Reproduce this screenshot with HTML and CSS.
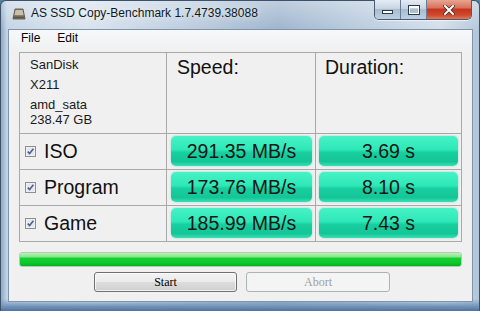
FILE: index.html
```html
<!DOCTYPE html>
<html lang="en">
<head>
	<meta charset="UTF-8">
	<title>AS SSD Copy-Benchmark 1.7.4739.38088</title>
	<link rel="stylesheet" href="styles.css">
</head>
<body>
	<div class="window">
		<!-- title bar -->
		<div class="titlebar">
			<svg class="app-icon" width="14" height="13" viewBox="0 0 14 13">
				<path d="M1 12 L3 2 L11 2 L13 12 Z" fill="#8a7f6a" stroke="#4f4636" stroke-width="0.8"/>
				<path d="M3.5 3 L10.5 3 L11.5 8 L2.5 8 Z" fill="#c8bfa8"/>
				<rect x="2" y="9.5" width="10" height="1.5" fill="#5e5443"/>
			</svg>
			<span class="title">AS SSD Copy-Benchmark 1.7.4739.38088</span>
			<div class="caption-buttons">
				<div class="cap-btn cap-min"><span class="glyph-min"></span></div>
				<div class="cap-btn cap-max"><span class="glyph-max"></span></div>
				<div class="cap-btn cap-close">
					<svg width="12" height="10" viewBox="0 0 12 10">
						<path d="M2 1 L10 9 M10 1 L2 9" stroke="#3a2a2a" stroke-width="3.4" stroke-linecap="square"/>
						<path d="M2 1 L10 9 M10 1 L2 9" stroke="#fff" stroke-width="2" stroke-linecap="square"/>
					</svg>
				</div>
			</div>
		</div>

		<!-- client area -->
		<div class="client">
			<div class="menubar">
				<span>File</span>
				<span>Edit</span>
			</div>

			<div class="results">
				<div class="cell drive-info">
					<div class="info-line">SanDisk</div>
					<div class="info-line">X211</div>
					<div class="info-line">amd_sata</div>
					<div class="info-line last">238.47 GB</div>
				</div>
				<div class="cell head">Speed:</div>
				<div class="cell head">Duration:</div>

				<div class="cell test-name">
					<span class="check"><svg width="11" height="11" viewBox="0 0 11 11"><rect x="0.5" y="0.5" width="10" height="10" fill="#f4f4f4" stroke="#8e8f8f"/><rect x="1.5" y="1.5" width="8" height="8" fill="#e6e8ec"/><path d="M2.8 5.6 L4.6 7.6 L8.4 2.8" fill="none" stroke="#4a5f97" stroke-width="1.6"/></svg></span>
					ISO
				</div>
				<div class="cell value-cell"><div class="value">291.35 MB/s</div></div>
				<div class="cell value-cell"><div class="value">3.69 s</div></div>

				<div class="cell test-name">
					<span class="check"><svg width="11" height="11" viewBox="0 0 11 11"><rect x="0.5" y="0.5" width="10" height="10" fill="#f4f4f4" stroke="#8e8f8f"/><rect x="1.5" y="1.5" width="8" height="8" fill="#e6e8ec"/><path d="M2.8 5.6 L4.6 7.6 L8.4 2.8" fill="none" stroke="#4a5f97" stroke-width="1.6"/></svg></span>
					Program
				</div>
				<div class="cell value-cell"><div class="value">173.76 MB/s</div></div>
				<div class="cell value-cell"><div class="value">8.10 s</div></div>

				<div class="cell test-name">
					<span class="check"><svg width="11" height="11" viewBox="0 0 11 11"><rect x="0.5" y="0.5" width="10" height="10" fill="#f4f4f4" stroke="#8e8f8f"/><rect x="1.5" y="1.5" width="8" height="8" fill="#e6e8ec"/><path d="M2.8 5.6 L4.6 7.6 L8.4 2.8" fill="none" stroke="#4a5f97" stroke-width="1.6"/></svg></span>
					Game
				</div>
				<div class="cell value-cell"><div class="value">185.99 MB/s</div></div>
				<div class="cell value-cell"><div class="value">7.43 s</div></div>
			</div>

			<div class="progress"><div class="progress-fill"></div></div>

			<div class="actions">
				<button class="btn">Start</button>
				<button class="btn disabled">Abort</button>
			</div>
		</div>
	</div>
</body>
</html>
```

FILE: styles.css
```css
html, body { margin: 0; padding: 0; }
body { width: 480px; height: 311px; overflow: hidden; background: #5b7ea3; font-family: "Liberation Sans", Arial, sans-serif; }

.window {
	box-sizing: border-box;
	width: 480px; height: 311px;
	display: flex; flex-direction: column;
	padding: 0 6px 9px 7px;
	border: 1px solid #3d5169; border-bottom: none;
	border-radius: 6px 6px 0 0;
	background:
		linear-gradient(to top, #4f739c 0, #7596bb 5px, rgba(140,170,200,0) 12px),
		linear-gradient(to bottom, rgba(255,255,255,0.35), rgba(255,255,255,0) 30px),
		linear-gradient(to right, #8fa9c6 0, #c4d4e4 6px, #d8e3ee 18%, #b7c9dc 42%, #9db4cd 58%, #b9cbdd 75%, #d3dfeb 92%, #b2c6da 100%);
}

/* title bar */
.titlebar { height: 28px; display: flex; align-items: flex-start; flex-shrink: 0; }
.app-icon { margin: 6px 0 0 4px; flex-shrink: 0; }
.title { margin: 5px 0 0 5px; font-size: 12px; color: #101820; white-space: nowrap; text-shadow: 0 0 6px rgba(255,255,255,0.9); flex: 1; }
.caption-buttons { display: flex; margin-top: -1px; margin-right: 1px; border: 1px solid #4a5a70; border-top: none; border-radius: 0 0 5px 5px; overflow: hidden; box-shadow: 0 1px 0 rgba(255,255,255,0.6); }
.cap-btn { height: 19px; display: flex; align-items: center; justify-content: center; }
.cap-min, .cap-max { width: 25px; background: linear-gradient(#e4ecf4, #c6d4e2 45%, #a9bdd2 50%, #bcd0e2); border-right: 1px solid #6a7c92; }
.cap-close { width: 44px; background: linear-gradient(#e8a592, #d9725c 40%, #c4361e 50%, #d04a2e 80%, #e07858); }
.glyph-min { width: 9px; height: 2px; margin-top: 5px; background: #fff; border: 1px solid #2e3a4a; }
.glyph-max { width: 8px; height: 5px; border: 1px solid #fff; border-top-width: 2px; outline: 1px solid #2e3a4a; }

/* client */
.client { flex: 1; display: flex; flex-direction: column; background: #f0f0f0; border: 1px solid #7f93ab; padding: 0 0 0 10px; }
.menubar { height: 22px; display: flex; gap: 17px; padding-left: 12px; margin-left: -10px; font-size: 12px; line-height: 16px; color: #000; background: linear-gradient(#f6f8fa, #f0f0f0); }

.results {
	width: 443px; box-sizing: border-box;
	display: grid;
	grid-template-columns: 146px 148px 145px;
	grid-template-rows: 80px 35px 35px 35px;
	gap: 1px; padding: 1px;
	background: #a9a9a9;
}
.cell { background: #f0f0f0; box-sizing: border-box; }
.drive-info { padding: 2px 0 0 10px; font-size: 13px; color: #1a1a1a; }
.info-line { line-height: 20px; }
.info-line.last { line-height: 15px; margin-top: -3px; }
.head { font-size: 19.5px; line-height: 22px; padding: 3px 0 0 10px; color: #111; }
.head + .head { padding-left: 9px; }

.test-name { display: flex; align-items: center; padding-left: 5px; font-size: 19.5px; color: #111; }
.check { display: flex; margin-right: 8px; }
.value-cell { padding: 2px 3px 3px 4px; }
.value-cell + .value-cell { padding-left: 3px; padding-right: 3px; }
.value {
	height: 30px; border-radius: 5px;
	display: flex; align-items: center; justify-content: center;
	font-size: 19.5px; color: #151515;
	background: linear-gradient(#46f2c6 0, #2ee8b8 45%, #18cf9f 55%, #14c597 85%, #38e0b6 100%);
	box-shadow: 0 0 2px rgba(20,200,150,0.5);
}

/* progress */
.progress { width: 443px; height: 15px; margin-top: 10px; box-sizing: border-box; border: 1px solid #b8c8b8; border-radius: 3px; background: #e6e6e6; }
.progress-fill { height: 100%; border-radius: 2px; background: linear-gradient(#b8f4b4 0, #86e68a 30%, #14d032 40%, #0cc82a 75%, #04b020 100%); }

/* buttons */
.actions { display: flex; gap: 9px; padding-left: 75px; margin-top: 5px; }
.btn {
	width: 143px; height: 20px; padding: 0;
	font-family: "Liberation Serif", "Times New Roman", serif; font-size: 12px; color: #000;
	border: 1px solid #707070; border-radius: 3px;
	background: linear-gradient(#f3f3f3, #ebebeb 48%, #dddddd 52%, #cfcfcf);
	box-shadow: inset 0 0 0 1px rgba(255,255,255,0.7);
}
.btn.disabled { width: 144px; color: #a0a0a0; border-color: #adb2b5; background: #f4f4f4; box-shadow: none; }
```
